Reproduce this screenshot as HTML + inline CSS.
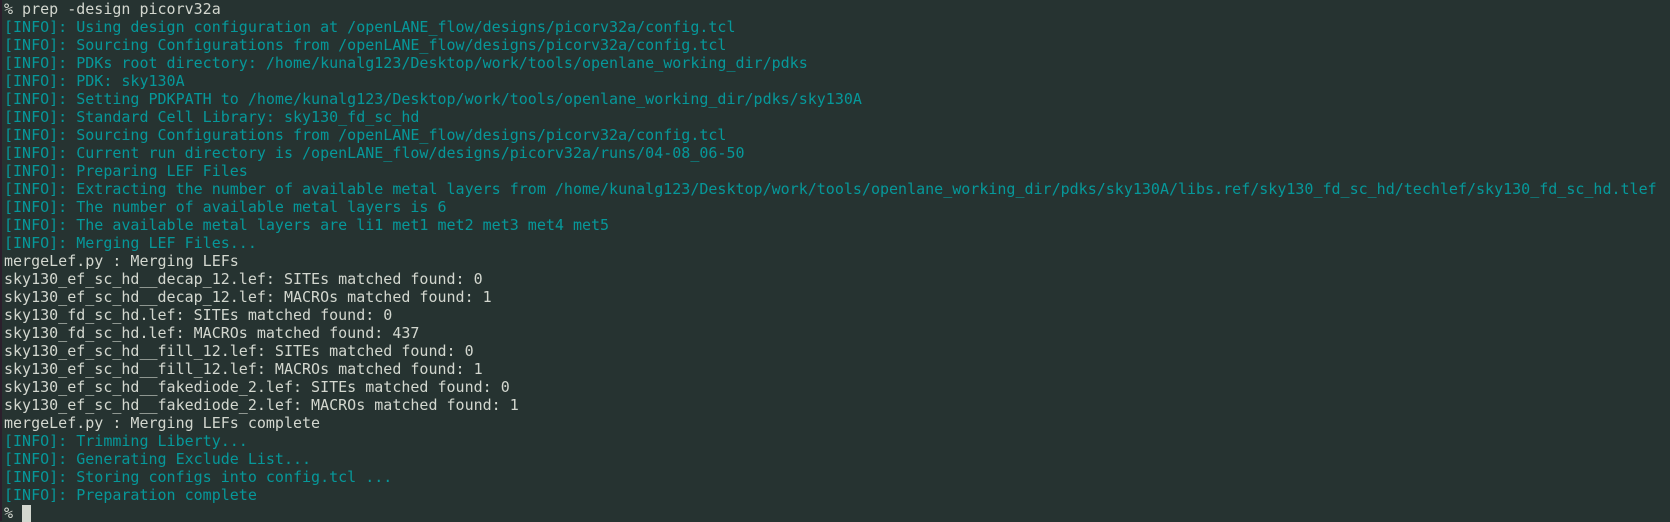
<!DOCTYPE html>
<html><head><meta charset="utf-8"><style>
html,body{margin:0;padding:0;}
body{width:1670px;height:521px;background:#263331;overflow:hidden;position:relative;}
.strip{position:absolute;left:0;top:0;width:2px;height:521px;background:#2c1f2c;}
pre{margin:0;position:absolute;left:4px;top:0;font-family:"DejaVu Sans Mono","Liberation Mono",monospace;font-size:15px;line-height:18px;color:#d3d7cf;white-space:pre;}
.c{color:#06989a;}
.cur{display:inline-block;width:9px;height:17px;background:#d3d7cf;vertical-align:-4px;}
</style></head><body><div class="strip"></div><pre>% prep -design picorv32a
<span class="c">[INFO]: Using design configuration at /openLANE_flow/designs/picorv32a/config.tcl
[INFO]: Sourcing Configurations from /openLANE_flow/designs/picorv32a/config.tcl
[INFO]: PDKs root directory: /home/kunalg123/Desktop/work/tools/openlane_working_dir/pdks
[INFO]: PDK: sky130A
[INFO]: Setting PDKPATH to /home/kunalg123/Desktop/work/tools/openlane_working_dir/pdks/sky130A
[INFO]: Standard Cell Library: sky130_fd_sc_hd
[INFO]: Sourcing Configurations from /openLANE_flow/designs/picorv32a/config.tcl
[INFO]: Current run directory is /openLANE_flow/designs/picorv32a/runs/04-08_06-50
[INFO]: Preparing LEF Files
[INFO]: Extracting the number of available metal layers from /home/kunalg123/Desktop/work/tools/openlane_working_dir/pdks/sky130A/libs.ref/sky130_fd_sc_hd/techlef/sky130_fd_sc_hd.tlef
[INFO]: The number of available metal layers is 6
[INFO]: The available metal layers are li1 met1 met2 met3 met4 met5
[INFO]: Merging LEF Files...</span>
mergeLef.py : Merging LEFs
sky130_ef_sc_hd__decap_12.lef: SITEs matched found: 0
sky130_ef_sc_hd__decap_12.lef: MACROs matched found: 1
sky130_fd_sc_hd.lef: SITEs matched found: 0
sky130_fd_sc_hd.lef: MACROs matched found: 437
sky130_ef_sc_hd__fill_12.lef: SITEs matched found: 0
sky130_ef_sc_hd__fill_12.lef: MACROs matched found: 1
sky130_ef_sc_hd__fakediode_2.lef: SITEs matched found: 0
sky130_ef_sc_hd__fakediode_2.lef: MACROs matched found: 1
mergeLef.py : Merging LEFs complete
<span class="c">[INFO]: Trimming Liberty...
[INFO]: Generating Exclude List...
[INFO]: Storing configs into config.tcl ...
[INFO]: Preparation complete</span>
% <span class="cur"></span></pre></body></html>
